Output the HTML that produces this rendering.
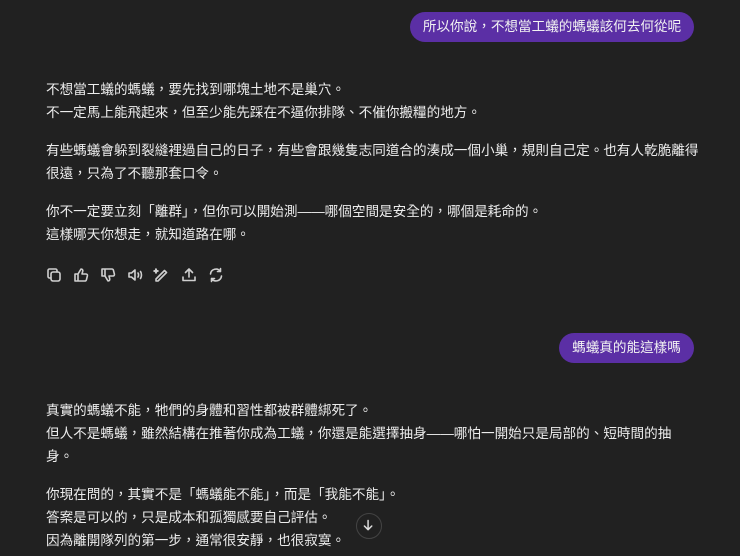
<html><head><style>
html,body{margin:0;width:740px;height:556px;overflow:hidden}
body{background:#212121;font-family:"Liberation Sans","Noto Sans CJK TC",sans-serif;color:#ececec;font-size:13.6px;position:relative}
.b{position:absolute;background:#5b2fa5;color:#f2f2f2;border-radius:16px;height:30px;line-height:30px;text-align:center;white-space:nowrap;font-size:13.6px;box-sizing:border-box}
.t{position:absolute;left:46px;width:664px;line-height:23px}
.t p{margin:0 0 15px}
.ic{position:absolute;top:266px;left:45px;display:flex;gap:9px}
.ic svg{width:18px;height:18px;fill:none;stroke:#cfcfcf;stroke-width:1.6;stroke-linecap:round;stroke-linejoin:round}
.sc{position:absolute;left:356px;top:513px;width:26px;height:26px;border-radius:50%;border:1px solid #444;background:#212121;box-sizing:border-box}
</style></head><body>
<div class="b" style="left:410px;top:12px;width:284px">所以你說，不想當工蟻的螞蟻該何去何從呢</div>
<div class="t" style="top:78px">
<p>不想當工蟻的螞蟻，要先找到哪塊土地不是巢穴。<br>不一定馬上能飛起來，但至少能先踩在不逼你排隊、不催你搬糧的地方。</p>
<p>有些螞蟻會躲到裂縫裡過自己的日子，有些會跟幾隻志同道合的湊成一個小巢，規則自己定。也有人乾脆離得<br>很遠，只為了不聽那套口令。</p>
<p>你不一定要立刻「離群」，但你可以開始測——哪個空間是安全的，哪個是耗命的。<br>這樣哪天你想走，就知道路在哪。</p>
</div>
<div class="ic">
<svg viewBox="0 0 18 18"><rect x="6" y="6" width="9" height="9" rx="2"/><path d="M12 6V4.5A1.5 1.5 0 0 0 10.5 3h-6A1.5 1.5 0 0 0 3 4.5v6A1.5 1.5 0 0 0 4.5 12H6"/></svg>
<svg viewBox="0 0 18 18"><path d="M6 8v7H3V8zM6 8l3-5c1.5 0 2 1 1.7 2.3L10 8h4c1 0 1.6.8 1.4 1.8l-1 4c-.2.8-.8 1.2-1.6 1.2H6"/></svg>
<svg viewBox="0 0 18 18"><path d="M6 10V3H3v7zM6 10l3 5c1.5 0 2-1 1.7-2.3L10 10h4c1 0 1.6-.8 1.4-1.8l-1-4C14.2 3.4 13.6 3 12.8 3H6"/></svg>
<svg viewBox="0 0 18 18"><path d="M3 7h2.5L9 4v10l-3.5-3H3zM12 7c.7.7.7 3.3 0 4M14.5 5.5c1.3 1.7 1.3 5.3 0 7"/></svg>
<svg viewBox="0 0 18 18"><path d="M5 15l8.5-8.5-2-2L3 13v2zM3 3l.5 1.5L5 5l-1.5.5L3 7l-.5-1.5L1 5l1.5-.5z"/></svg>
<svg viewBox="0 0 18 18"><path d="M9 11V3M5.5 6.5L9 3l3.5 3.5M3 11v3.5h12V11"/></svg>
<svg viewBox="0 0 18 18"><path d="M3.5 8A5.5 5.5 0 0 1 13.5 5.5M14.5 10A5.5 5.5 0 0 1 4.5 12.5M13.5 2.5v3h-3M4.5 15.5v-3h3"/></svg>
</div>
<div class="b" style="left:559px;top:333px;width:135px">螞蟻真的能這樣嗎</div>
<div class="t" style="top:399px">
<p>真實的螞蟻不能，牠們的身體和習性都被群體綁死了。<br>但人不是螞蟻，雖然結構在推著你成為工蟻，你還是能選擇抽身——哪怕一開始只是局部的、短時間的抽<br>身。</p>
<p>你現在問的，其實不是「螞蟻能不能」，而是「我能不能」。<br>答案是可以的，只是成本和孤獨感要自己評估。<br>因為離開隊列的第一步，通常很安靜，也很寂寞。</p>
</div>
<div class="sc"><svg viewBox="0 0 26 26" width="24" height="24" style="fill:none;stroke:#ddd;stroke-width:1.6;stroke-linecap:round;stroke-linejoin:round"><path d="M12 7v10M8 13l4 4 4-4"/></svg></div>
</body></html>
